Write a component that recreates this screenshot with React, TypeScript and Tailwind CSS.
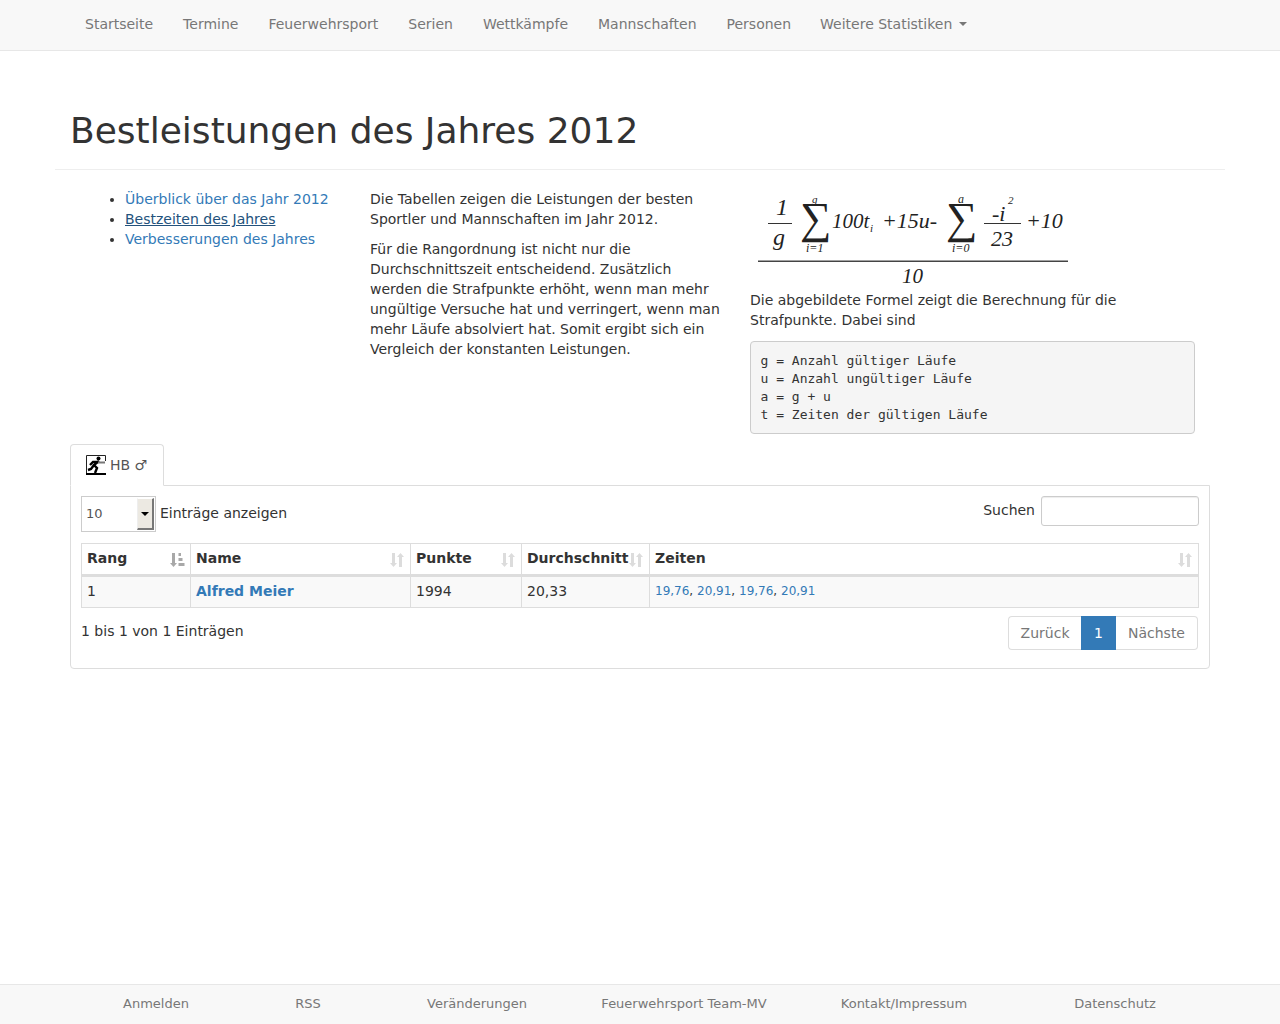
const NAV = ["Startseite", "Termine", "Feuerwehrsport", "Serien", "Wettkämpfe", "Mannschaften", "Personen"];

const FOOTER = [
  { label: "Anmelden", cls: "w-[172px]" },
  { label: "RSS", cls: "w-[132px]" },
  { label: "Veränderungen", cls: "w-[206px]" },
  { label: "Feuerwehrsport Team-MV", cls: "w-[208px]" },
  { label: "Kontakt/Impressum", cls: "w-[232px]" },
  { label: "Datenschutz", cls: "w-[190px]" },
];

function SortIcon() {
  return (
    <svg width="16" height="16" viewBox="0 0 16 16" className="text-[#dcdcdc]" fill="currentColor">
      <path d="M3 1h3v10h2l-3.5 4L1 11h2z" />
      <path d="M10 15h3V5h2l-3.5-4L8 5h2z" />
    </svg>
  );
}

function SortActiveIcon() {
  return (
    <svg width="16" height="16" viewBox="0 0 16 16" className="text-[#a8a8a8]" fill="currentColor">
      <path d="M3 1h3v10h2l-3.5 4L1 11h2z" />
      <rect x="9.5" y="1" width="2.5" height="3" />
      <rect x="9.5" y="6" width="4" height="3" />
      <rect x="9.5" y="11" width="6" height="3" />
    </svg>
  );
}

function RunnerIcon() {
  return (
    <svg width="20" height="20" viewBox="0 0 20 20" className="shrink-0">
      <path d="M0.5 18V0.5H19.5V6" fill="none" stroke="#222" />
      <rect x="0" y="18" width="20" height="2" fill="#000" />
      <circle cx="12.5" cy="3.5" r="2" fill="#000" />
      <path d="M13 6L8 10L11 13L9 18M8 10L5 14L2 15M12 7L7 7L4 10" fill="none" stroke="#000" strokeWidth="2.4" />
      <path d="M12 7.5H19" stroke="#777" strokeWidth="2" />
    </svg>
  );
}

function Formula() {
  const serif = { fontFamily: '"Liberation Serif", serif', fontStyle: "italic" } as const;
  return (
    <svg width="330" height="101" viewBox="0 0 330 101" className="block" fill="#222" style={serif}>
      <text x="26" y="26" fontSize="24">1</text>
      <rect x="18" y="34" width="24" height="1" fill="#333" />
      <text x="23" y="56" fontSize="24">g</text>
      <text x="50" y="44" fontSize="44" fontStyle="normal">∑</text>
      <text x="62" y="14" fontSize="11">g</text>
      <text x="56" y="63" fontSize="12">i=1</text>
      <text x="82" y="39" fontSize="21">100t</text>
      <text x="120" y="43" fontSize="11">i</text>
      <text x="132" y="39" fontSize="22">+15u-</text>
      <text x="196" y="44" fontSize="44" fontStyle="normal">∑</text>
      <text x="208" y="14" fontSize="12">a</text>
      <text x="202" y="63" fontSize="12">i=0</text>
      <text x="242" y="32" fontSize="22">-i</text>
      <text x="258" y="15" fontSize="11">2</text>
      <rect x="234" y="34" width="37" height="1" fill="#333" />
      <text x="241" y="57" fontSize="22">23</text>
      <text x="276" y="39" fontSize="22">+10</text>
      <rect x="8" y="71.5" width="310" height="1.5" fill="#444" />
      <text x="152" y="94" fontSize="21">10</text>
    </svg>
  );
}

function Th({ w, label, active }: { w: string; label: string; active?: boolean }) {
  return (
    <div className={`${w} relative h-[30px] border-r border-[#ddd] pl-[5px] pt-[4px] last:border-r-0`}>
      <span className="font-bold">{label}</span>
      <span className="absolute right-[5px] top-[8px]">{active ? <SortActiveIcon /> : <SortIcon />}</span>
    </div>
  );
}

export default function App() {
  return (
    <div className="flex min-h-[1024px] flex-col text-[14px] leading-[20px] text-[#333] [font-family:'DejaVu_Sans',sans-serif]">
      {/* navbar */}
      <nav className="h-[51px] border-b border-[#e7e7e7] bg-[#f8f8f8]">
        <div className="mx-auto flex w-[1140px] text-[#777]">
          {NAV.map((item) => (
            <a key={item} className="px-[15px] pb-[16px] pt-[14px]">{item}</a>
          ))}
          <a className="-ml-px flex items-center px-[15px] pb-[16px] pt-[14px]">
            Weitere Statistiken
            <span className="ml-[7px] border-x-[4px] border-t-[4px] border-x-transparent border-t-[#777]" />
          </a>
        </div>
      </nav>

      <main className="mx-auto w-[1170px]">
        <div className="mt-[60px] border-b border-[#eee] px-[15px] pb-[18px]">
          <h1 className="text-[36px] font-normal leading-[40px]">Bestleistungen des Jahres 2012</h1>
        </div>

        <div className="mx-[15px] mt-[19px] flex">
          <div className="w-[285px] px-[15px]">
            <ul className="list-disc pl-[40px]">
              <li><a className="text-[#337ab7]">Überblick über das Jahr 2012</a></li>
              <li><a className="text-[#23527c] underline">Bestzeiten des Jahres</a></li>
              <li><a className="text-[#337ab7]">Verbesserungen des Jahres</a></li>
            </ul>
          </div>
          <div className="w-[380px] px-[15px]">
            <p className="mb-[10px]">Die Tabellen zeigen die Leistungen der besten Sportler und Mannschaften im Jahr 2012.</p>
            <p>Für die Rangordnung ist nicht nur die Durchschnittszeit entscheidend. Zusätzlich werden die Strafpunkte erhöht, wenn man mehr ungültige Versuche hat und verringert, wenn man mehr Läufe absolviert hat. Somit ergibt sich ein Vergleich der konstanten Leistungen.</p>
          </div>
          <div className="w-[475px] px-[15px]">
            <Formula />
            <p className="mb-[11px]">Die abgebildete Formel zeigt die Berechnung für die Strafpunkte. Dabei sind</p>
            <pre className="rounded-[4px] border border-[#ccc] bg-[#f5f5f5] p-[9.5px] text-[13px] leading-[18px] text-[#333] [font-family:'DejaVu_Sans_Mono',monospace]">
              {"g = Anzahl gültiger Läufe\nu = Anzahl ungültiger Läufe\na = g + u\nt = Zeiten der gültigen Läufe"}
            </pre>
          </div>
        </div>

        {/* tabs */}
        <div className="mx-[15px] mt-[10px]">
          <div className="relative z-10 -mb-px flex h-[42px] w-[94px] items-center gap-[4px] rounded-t-[4px] border border-b-white border-[#ddd] bg-white pl-[15px] text-[#555]">
            <RunnerIcon />
            <span>HB ♂</span>
          </div>
          <div className="rounded-b-[4px] border border-[#ddd] px-[10px] pb-[18px] pt-[10px]">
            <div className="flex h-[36px] items-center justify-between">
              <div className="flex items-center gap-[4px]">
                <div className="flex h-[36px] w-[75px] items-center justify-between border border-[#ccc] bg-white pl-[4px] pr-[1px] text-[13px] text-[#555]">
                  10
                  <span className="flex h-[32px] w-[17px] items-center justify-center border-r-2 border-b-2 border-l border-t border-r-[#777] border-b-[#777] border-l-[#eee] border-t-white bg-[#ece9e2]">
                    <span className="border-x-[4px] border-t-[4px] border-x-transparent border-t-black" />
                  </span>
                </div>
                <span className="-mt-[2px]">Einträge anzeigen</span>
              </div>
              <label className="flex items-start gap-[6px] self-start">
                <span className="mt-[4px]">Suchen</span>
                <span className="h-[30px] w-[158px] rounded-[3px] border border-[#ccc] bg-white shadow-[inset_0_1px_1px_rgba(0,0,0,0.075)]" />
              </label>
            </div>

            <div className="mt-[11px] border border-[#ddd]">
              <div className="flex border-b-[3px] border-[#ddd]">
                <Th w="w-[109px]" label="Rang" active />
                <Th w="w-[220px]" label="Name" />
                <Th w="w-[111px]" label="Punkte" />
                <Th w="w-[128px]" label="Durchschnitt" />
                <Th w="flex-1" label="Zeiten" />
              </div>
              <div className="flex h-[30px] bg-[#f9f9f9] pb-0">
                <div className="h-full w-[109px] border-r border-[#ddd] pl-[5px] pt-[4px]">1</div>
                <div className="h-full w-[220px] border-r border-[#ddd] pl-[5px] pt-[4px] font-bold text-[#337ab7]">Alfred Meier</div>
                <div className="h-full w-[111px] border-r border-[#ddd] pl-[5px] pt-[4px]">1994</div>
                <div className="h-full w-[128px] border-r border-[#ddd] pl-[5px] pt-[4px]">20,33</div>
                <div className="h-full flex-1 pl-[5px] pt-[4px] text-[12px]">
                  <a className="text-[#337ab7]">19,76</a>, <a className="text-[#337ab7]">20,91</a>, <a className="text-[#337ab7]">19,76</a>, <a className="text-[#337ab7]">20,91</a>
                </div>
              </div>
            </div>

            <div className="mt-[8px] flex items-start justify-between">
              <span className="mt-[5px]">1 bis 1 von 1 Einträgen</span>
              <div className="mr-px flex h-[34px] text-[#777]">
                <span className="flex w-[73px] items-center justify-center rounded-l-[4px] border border-r-0 border-[#ddd]">Zurück</span>
                <span className="flex items-center border border-[#337ab7] bg-[#337ab7] px-[12px] text-white">1</span>
                <span className="flex items-center rounded-r-[4px] border border-l-0 border-[#ddd] px-[12px]">Nächste</span>
              </div>
            </div>
          </div>
        </div>
      </main>

      <footer className="mt-auto h-[40px] border-t border-[#e7e7e7] bg-[#f8f8f8] text-[13px] text-[#777]">
        <div className="mx-auto flex w-[1140px]">
          {FOOTER.map((f) => (
            <a key={f.label} className={`${f.cls} py-[9px] text-center`}>{f.label}</a>
          ))}
        </div>
      </footer>
    </div>
  );
}
